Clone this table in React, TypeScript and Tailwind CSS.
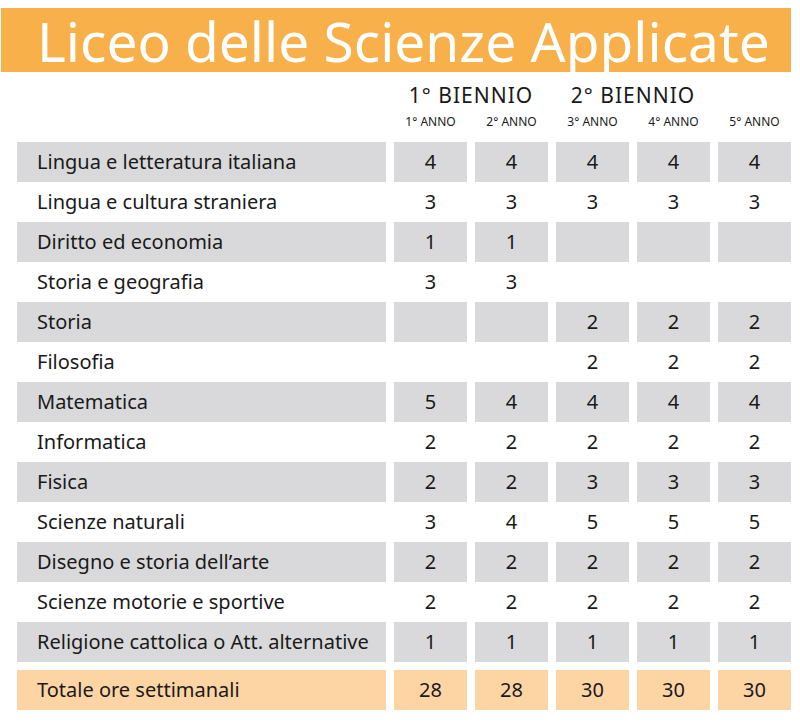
const years = ["1° ANNO", "2° ANNO", "3° ANNO", "4° ANNO", "5° ANNO"]

const subjects: { name: string; hours: (number | null)[] }[] = [
  { name: "Lingua e letteratura italiana", hours: [4, 4, 4, 4, 4] },
  { name: "Lingua e cultura straniera", hours: [3, 3, 3, 3, 3] },
  { name: "Diritto ed economia", hours: [1, 1, null, null, null] },
  { name: "Storia e geografia", hours: [3, 3, null, null, null] },
  { name: "Storia", hours: [null, null, 2, 2, 2] },
  { name: "Filosofia", hours: [null, null, 2, 2, 2] },
  { name: "Matematica", hours: [5, 4, 4, 4, 4] },
  { name: "Informatica", hours: [2, 2, 2, 2, 2] },
  { name: "Fisica", hours: [2, 2, 3, 3, 3] },
  { name: "Scienze naturali", hours: [3, 4, 5, 5, 5] },
  { name: "Disegno e storia dell’arte", hours: [2, 2, 2, 2, 2] },
  { name: "Scienze motorie e sportive", hours: [2, 2, 2, 2, 2] },
  { name: "Religione cattolica o Att. alternative", hours: [1, 1, 1, 1, 1] },
]

const totals = [28, 28, 30, 30, 30]

export default function App() {
  return (
    <div className="w-[800px] h-[724px] bg-white text-[#1a1a1a] font-['Noto_Sans',sans-serif] overflow-hidden">
      <div className="mt-2 ml-px w-[790px] h-16 bg-[#f8b04b] flex items-center pl-[36px]">
        <h1 className="text-white text-[55px] leading-none font-normal">
          Liceo delle Scienze Applicate
        </h1>
      </div>

      <div className="ml-[17px] w-[774px]">
        <div className="grid grid-cols-[369px_repeat(5,73px)] grid-rows-[34px_36px] gap-x-2 h-[70px]">
          <div />
          <div className="col-span-2 flex items-end justify-center text-[21px] leading-none tracking-[1px]">
            1° BIENNIO
          </div>
          <div className="col-span-2 flex items-end justify-center text-[21px] leading-none tracking-[1px]">
            2° BIENNIO
          </div>
          <div />
          <div />
          {years.map((y) => (
            <div key={y} className="flex items-start justify-center pt-[10px] text-[12px] leading-none">
              {y}
            </div>
          ))}
        </div>

        <div className="flex flex-col">
          {subjects.map((s, i) => {
            const shaded = i % 2 === 0
            return (
              <div key={s.name} className="grid grid-cols-[369px_repeat(5,73px)] gap-x-2 h-10">
                <div className={`flex items-center pl-5 text-[20px] ${shaded ? "bg-[#d9d9db]" : ""}`}>{s.name}</div>
                {s.hours.map((h, j) => (
                  <div
                    key={j}
                    className={`flex items-center justify-center text-[20px] ${shaded ? "bg-[#d9d9db]" : ""}`}
                  >
                    {h}
                  </div>
                ))}
              </div>
            )
          })}
        </div>

        <div className="grid grid-cols-[369px_repeat(5,73px)] gap-x-2 h-10 mt-2">
          <div className="flex items-center pl-5 text-[20px] bg-[#fdd5a4]">Totale ore settimanali</div>
          {totals.map((t, j) => (
            <div key={j} className="flex items-center justify-center text-[20px] bg-[#fdd5a4]">
              {t}
            </div>
          ))}
        </div>
      </div>
    </div>
  )
}
